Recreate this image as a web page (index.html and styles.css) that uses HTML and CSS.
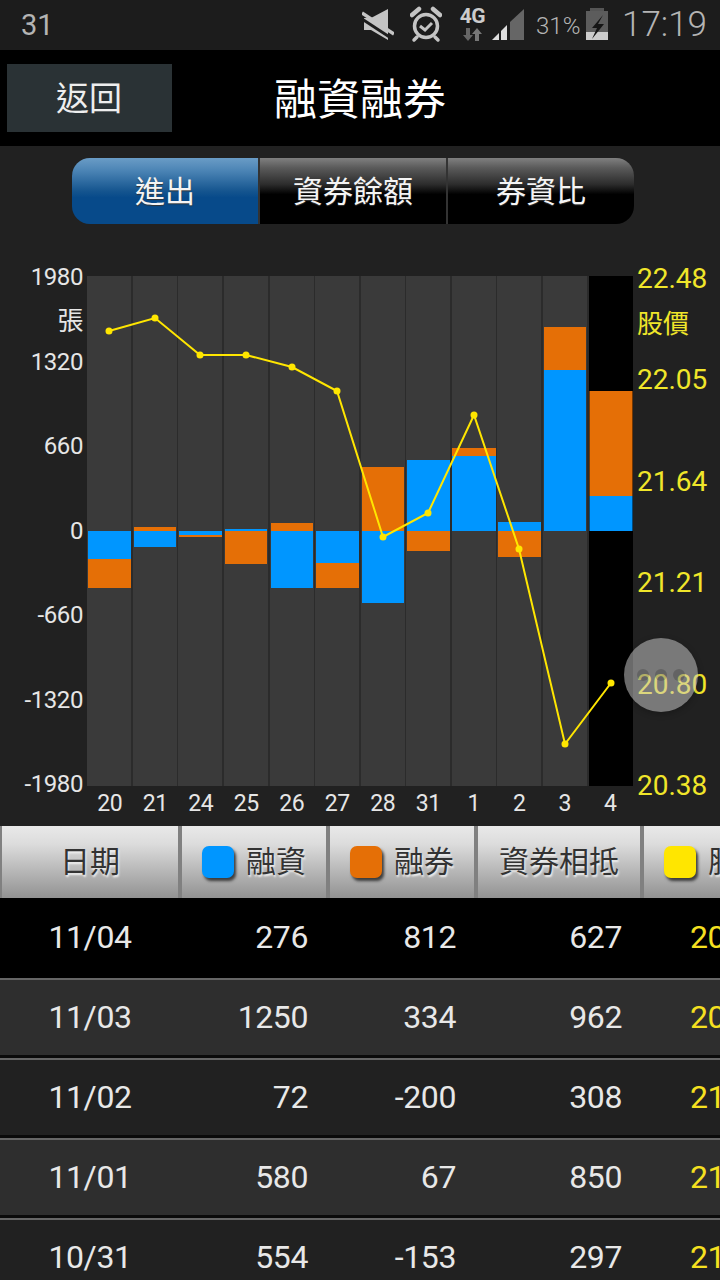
FILE: index.html
```html
<!DOCTYPE html>
<html lang="zh-Hant">
<head>
  <meta charset="UTF-8">
  <title>融資融券</title>
  <link rel="stylesheet" href="styles.css">
</head>
<body>
<div class="screen">

  <div class="status-bar">
    <span class="status-day">31</span>
    <svg class="ic-mute" width="32" height="50" viewBox="0 0 32 50">
      <polygon points="2,18 9,18 26,9 26,40 9,30 2,30" fill="#c4c4c4"/>
      <line x1="-3" y1="17" x2="29" y2="38" stroke="#1c1c1c" stroke-width="3"/>
      <line x1="0" y1="13" x2="32" y2="34" stroke="#c4c4c4" stroke-width="3.5"/>
    </svg>
    <svg class="ic-alarm" width="32" height="50" viewBox="0 0 32 50" fill="none" stroke="#c4c4c4">
      <circle cx="16" cy="26" r="11.5" stroke-width="3.5"/>
      <path d="M10 26l5 4 7-7" stroke-width="3"/>
      <path d="M2 15l7-6M30 15l-7-6" stroke-width="4.5" stroke-linecap="round"/>
      <path d="M7 37l-3 3M25 37l3 3" stroke-width="3.5" stroke-linecap="round"/>
    </svg>
    <div class="net">
      <span class="net-label">4G</span>
      <svg width="20" height="14" viewBox="0 0 20 14" fill="#666">
        <polygon points="5,13 0,7 3,7 3,0 7,0 7,7 10,7"/>
        <polygon points="14,0 19,6 16,6 16,13 12,13 12,6 9,6" fill="#777"/>
      </svg>
    </div>
    <svg class="ic-signal" width="32" height="50" viewBox="0 0 32 50">
      <polygon points="0,40 7,33 7,40" fill="#ddd"/>
      <polygon points="9,40 9,31 15,25 15,40" fill="#ddd"/>
      <polygon points="18,40 18,22 32,9 32,40" fill="#666"/>
    </svg>
    <span class="status-pct">31%</span>
    <svg class="ic-batt" width="22" height="50" viewBox="0 0 22 50">
      <rect x="4" y="8" width="14" height="3" fill="#555"/>
      <rect x="0" y="11" width="22" height="21" fill="#5c5c5c"/>
      <rect x="0" y="32" width="22" height="8" fill="#ccc"/>
      <polygon points="17,15 6,28 11,28 6,39 18,24 12,24" fill="#151515"/>
    </svg>
    <span class="status-time">17:19</span>
  </div>

  <div class="title-bar">
    <button class="back-btn">返回</button>
    <h1 class="title">融資融券</h1>
  </div>

  <div class="chart-section">
    <div class="tabs">
      <div class="tab active">進出</div>
      <div class="tab">資券餘額</div>
      <div class="tab">券資比</div>
    </div>

    <div class="chart-row">
      <div class="axis-left">
        <span>1980</span>
        <span>1320</span>
        <span>660</span>
        <span>0</span>
        <span>-660</span>
        <span>-1320</span>
        <span>-1980</span>
        <span class="unit-left">張</span>
      </div>

      <svg class="plot" width="546" height="510" viewBox="87 276 546 510">
        <rect x="87" y="276" width="546" height="510" fill="#2b2b2b"/>
        <g fill="#3a3a3a">
          <rect x="87" y="276" width="44" height="510"/>
          <rect x="133" y="276" width="44" height="510"/>
          <rect x="178" y="276" width="44" height="510"/>
          <rect x="224" y="276" width="44" height="510"/>
          <rect x="270" y="276" width="44" height="510"/>
          <rect x="315" y="276" width="44" height="510"/>
          <rect x="361" y="276" width="44" height="510"/>
          <rect x="406" y="276" width="44" height="510"/>
          <rect x="452" y="276" width="44" height="510"/>
          <rect x="497" y="276" width="44" height="510"/>
          <rect x="543" y="276" width="44" height="510"/>
          <rect x="589" y="276" width="44" height="510" fill="#000"/>
        </g>
        <!-- 融資 -->
        <g fill="#0096ff">
          <rect x="88" y="531" width="43" height="28"/>
          <rect x="134" y="531" width="42" height="16"/>
          <rect x="179" y="531" width="43" height="4"/>
          <rect x="225" y="529" width="42" height="2"/>
          <rect x="271" y="531" width="42" height="57"/>
          <rect x="316" y="531" width="43" height="32"/>
          <rect x="362" y="531" width="42" height="72"/>
          <rect x="407" y="460" width="43" height="71"/>
          <rect x="452" y="456" width="44" height="75"/>
          <rect x="498" y="522" width="43" height="9"/>
          <rect x="544" y="370" width="42" height="161"/>
          <rect x="589.5" y="496" width="43" height="35"/>
        </g>
        <!-- 融券 -->
        <g fill="#e56f06">
          <rect x="88" y="559" width="43" height="29"/>
          <rect x="134" y="527" width="42" height="4"/>
          <rect x="179" y="535" width="43" height="2"/>
          <rect x="225" y="531" width="42" height="33"/>
          <rect x="271" y="523" width="42" height="8"/>
          <rect x="316" y="563" width="43" height="25"/>
          <rect x="362" y="467" width="42" height="64"/>
          <rect x="407" y="531" width="43" height="20"/>
          <rect x="452" y="448" width="44" height="8"/>
          <rect x="498" y="531" width="43" height="26"/>
          <rect x="544" y="327" width="42" height="43"/>
          <rect x="589.5" y="391" width="43" height="105"/>
        </g>
        <polyline fill="none" stroke="#ffe600" stroke-width="2"
          points="109,331 155,318 200,355 246,355 292,367 337,391 383,537 428,513 474,415 519,549 565,744 611,683"/>
        <g fill="#ffe600">
          <circle cx="109" cy="331" r="3.5"/>
          <circle cx="155" cy="318" r="3.5"/>
          <circle cx="200" cy="355" r="3.5"/>
          <circle cx="246" cy="355" r="3.5"/>
          <circle cx="292" cy="367" r="3.5"/>
          <circle cx="337" cy="391" r="3.5"/>
          <circle cx="383" cy="537" r="3.5"/>
          <circle cx="428" cy="513" r="3.5"/>
          <circle cx="474" cy="415" r="3.5"/>
          <circle cx="519" cy="549" r="3.5"/>
          <circle cx="565" cy="744" r="3.5"/>
          <circle cx="611" cy="683" r="3.5"/>
        </g>
      </svg>

      <div class="axis-right">
        <span>22.48</span>
        <span>22.05</span>
        <span>21.64</span>
        <span>21.21</span>
        <span>20.80</span>
        <span>20.38</span>
        <span class="unit-right">股價</span>
      </div>

      <!-- floating handle over the chart -->
      <div class="float-handle">
        <i></i><i></i><i></i>
      </div>
    </div>

    <div class="x-labels">
      <span>20</span><span>21</span><span>24</span><span>25</span><span>26</span><span>27</span>
      <span>28</span><span>31</span><span>1</span><span>2</span><span>3</span><span>4</span>
    </div>
  </div>

  <div class="table-head">
    <div class="th"><span>日期</span></div>
    <div class="th"><b class="swatch blue"></b><span>融資</span></div>
    <div class="th"><b class="swatch orange"></b><span>融券</span></div>
    <div class="th"><span>資券相抵</span></div>
    <div class="th th-last"><b class="swatch yellow"></b><span>股價</span></div>
  </div>

  <div class="row selected">
    <span class="date">11/04</span><span>276</span><span>812</span><span>627</span><span class="price">20.80</span>
  </div>
  <div class="row light">
    <span class="date">11/03</span><span>1250</span><span>334</span><span>962</span><span class="price">20.50</span>
  </div>
  <div class="row dark">
    <span class="date">11/02</span><span>72</span><span>-200</span><span>308</span><span class="price">21.30</span>
  </div>
  <div class="row light">
    <span class="date">11/01</span><span>580</span><span>67</span><span>850</span><span class="price">21.95</span>
  </div>
  <div class="row dark">
    <span class="date">10/31</span><span>554</span><span>-153</span><span>297</span><span class="price">21.50</span>
  </div>

</div>
</body>
</html>
```

FILE: styles.css
```css
* { box-sizing: border-box; }
html, body { margin: 0; padding: 0; background: #212121; }
.screen {
  width: 720px;
  height: 1280px;
  overflow: hidden;
  font-family: Roboto, "Noto Sans CJK TC", sans-serif;
  color: #eee;
}

/* status bar */
.status-bar {
  height: 50px;
  background: #1c1c1c;
  display: flex;
  align-items: flex-start;
  color: #b4b4b4;
  padding-left: 21px;
}
.status-bar svg { display: block; flex: none; }
.status-day { font-size: 29px; line-height: 50px; width: 341px; }
.ic-alarm { margin-left: 16px; }
.net { width: 27px; margin-left: 17px; display: flex; flex-direction: column; align-items: center; }
.net-label { font-size: 21px; font-weight: 700; line-height: 18px; margin-top: 7px; color: #ccc; letter-spacing: -.5px; }
.net svg { margin-top: 3px; }
.ic-signal { margin-left: 6px; }
.status-pct { font-size: 24px; font-weight: 300; line-height: 52px; margin-left: 12px; width: 44px; white-space: nowrap; }
.ic-batt { margin-left: 6px; }
.status-time { font-size: 35px; font-weight: 300; line-height: 50px; margin-left: 14px; white-space: nowrap; }

/* title */
.title-bar {
  height: 96px;
  background: #000;
  display: grid;
  grid-template-columns: 1fr auto 1fr;
  align-items: center;
  padding: 0 7px;
}
.back-btn {
  justify-self: start;
  width: 165px;
  height: 68px;
  background: #2a3235;
  border: 0;
  color: #eee;
  font: 400 33px "Noto Sans CJK TC", sans-serif;
  padding: 0 1px 4px 0;
}
.title { margin: 0; padding-top: 5px; font-size: 43px; font-weight: 400; color: #fff; line-height: 1; }

/* tabs */
.chart-section { height: 680px; background: #212121; padding-top: 12px; position: relative; }
.tabs {
  display: flex;
  width: 562px;
  height: 66px;
  margin-left: 72px;
  border-radius: 18px;
  overflow: hidden;
}
.tab {
  flex: 188px 0 0;
  display: flex;
  align-items: center;
  justify-content: center;
  padding-bottom: 4px;
  font-size: 30px;
  color: #f4f4f4;
  background: linear-gradient(#808080 0, #5a5a5a 15%, #2c2c2c 40%, #000 55%, #000 100%);
  border-left: 2px solid #333;
  text-shadow: 0 1px 1px #333;
}
.tab:first-child { flex-basis: 186px; border-left: 0; }
.tab.active { background: linear-gradient(#6a9cc6 0, #4a83b4 20%, #15558f 50%, #074a8a 60%, #074a8a 100%); }

/* chart */
.chart-row { display: flex; height: 510px; margin-top: 52px; position: relative; }
.axis-left {
  width: 87px;
  height: 531px;
  margin-top: -11px;
  padding-right: 4px;
  display: flex;
  flex-direction: column;
  justify-content: space-between;
  align-items: flex-end;
  font-size: 24px;
  letter-spacing: -.4px;
  line-height: 24px;
  color: #e6e6e6;
  position: relative;
}
.unit-left { position: absolute; top: 42px; right: 4px; font-size: 26px; line-height: 28px; }
.plot { display: block; flex: none; }
.axis-right {
  margin-left: 4px;
  height: 537px;
  margin-top: -12px;
  display: flex;
  flex-direction: column;
  justify-content: space-between;
  font-size: 28px;
  line-height: 30px;
  color: #f0e62a;
  position: relative;
}
.unit-right { position: absolute; top: 44px; left: 0; font-size: 26px; line-height: 32px; }
.float-handle {
  position: absolute;
  left: 624px;
  top: 362px;
  width: 74px;
  height: 74px;
  border-radius: 50%;
  background: rgba(200, 200, 200, .53);
  box-shadow: 0 2px 6px rgba(0, 0, 0, .25);
  display: flex;
  align-items: center;
  justify-content: center;
  gap: 6px;
}
.float-handle i {
  width: 12px;
  height: 12px;
  border-radius: 50%;
  background: rgba(0, 0, 0, .18);
}
.x-labels {
  display: grid;
  grid-template-columns: repeat(12, 45.5px);
  margin-left: 87px;
  height: 34px;
  align-items: center;
  text-align: center;
  font-size: 23px;
  letter-spacing: -.4px;
  color: #e6e6e6;
}

/* table */
.table-head, .row {
  display: grid;
  grid-template-columns: 176px 144px 144px 162px 200px;
  column-gap: 4px;
  padding-left: 2px;
  width: 834px;
}
.table-head { height: 72px; background: #808080; }
.th {
  display: flex;
  align-items: center;
  justify-content: center;
  gap: 12px;
  font-size: 30px;
  color: #333;
  text-shadow: 1px 2px 2px #f2f2f2;
  background: linear-gradient(#e9e9e9, #dcdcdc 25%, #929292);
  white-space: nowrap;
}
.th span { margin-bottom: 6px; }
.th-last { justify-content: flex-start; padding-left: 20px; }
.swatch {
  display: block;
  width: 32px;
  height: 32px;
  border-radius: 7px;
  box-shadow: 2px 3px 3px #3c3c3c;
}
.swatch.blue { background: #0096ff; }
.swatch.orange { background: #e56f06; }
.swatch.yellow { background: #ffe600; }

.row {
  height: 80px;
  padding-bottom: 2px;
  align-items: center;
  font-size: 32px;
  letter-spacing: -.4px;
  color: #e8e8e8;
  text-align: right;
  border-top: 2px solid #666;
  border-bottom: 3px solid #0a0a0a;
}
.row span { padding-right: 18px; }
.row .date { text-align: center; padding-right: 0; }
.row .price { text-align: left; padding: 0 0 0 46px; color: #f5e020; }
.row.selected { background: #000; border-top: 0; border-bottom: 0; }
.row.light { background: #2e2e2e; }
.row.dark { background: #212121; }
```
